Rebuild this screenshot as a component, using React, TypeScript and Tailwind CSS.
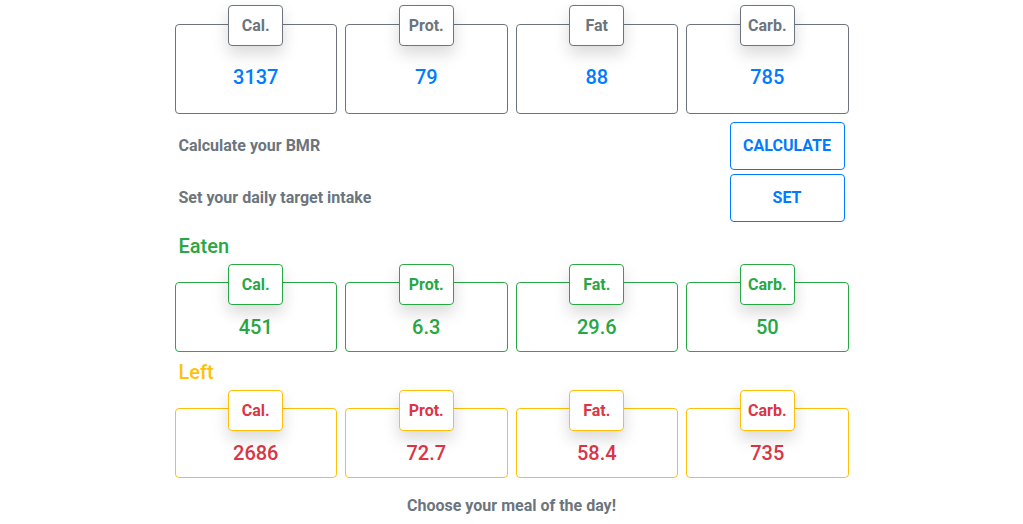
import React from "react";

type Stat = { label: string; value: string };

const target: Stat[] = [
  { label: "Cal.", value: "3137" },
  { label: "Prot.", value: "79" },
  { label: "Fat", value: "88" },
  { label: "Carb.", value: "785" },
];

const eaten: Stat[] = [
  { label: "Cal.", value: "451" },
  { label: "Prot.", value: "6.3" },
  { label: "Fat.", value: "29.6" },
  { label: "Carb.", value: "50" },
];

const left: Stat[] = [
  { label: "Cal.", value: "2686" },
  { label: "Prot.", value: "72.7" },
  { label: "Fat.", value: "58.4" },
  { label: "Carb.", value: "735" },
];

function StatCard({
  stat,
  labelClass,
  boxClass,
  valueClass,
}: {
  stat: Stat;
  labelClass: string;
  boxClass: string;
  valueClass: string;
}) {
  return (
    <div className="flex flex-col items-center">
      <div
        className={`relative z-10 w-[55px] h-[41px] flex items-center justify-center bg-white border rounded shadow-[0_8px_16px_rgba(0,0,0,0.15)] text-[16px] font-bold ${labelClass}`}
      >
        {stat.label}
      </div>
      <div className={`w-full border rounded flex justify-center ${boxClass}`}>
        <span className={`text-[20px] leading-[30px] font-medium ${valueClass}`}>{stat.value}</span>
      </div>
    </div>
  );
}

export default function App() {
  return (
    <main className="min-h-screen bg-white font-['Roboto',sans-serif]">
      <div className="w-[674px] mx-auto pt-[5px]">
        {/* Target */}
        <div className="grid grid-cols-4 gap-2">
          {target.map((s) => (
            <StatCard
              key={s.label}
              stat={s}
              labelClass="border-[#6c757d] text-[#6c757d]"
              boxClass="-mt-[22px] h-[90px] pt-[37px] border-[#6c757d]"
              valueClass="text-[#007bff]"
            />
          ))}
        </div>

        <div className="mt-[8px] flex items-center justify-between">
          <span className="pl-1 text-[16px] font-bold text-[#6c757d]">Calculate your BMR</span>
          <button className="mr-1 w-[115px] h-[48px] border border-[#007bff] rounded text-[16px] font-bold text-[#007bff]">
            CALCULATE
          </button>
        </div>
        <div className="mt-1 flex items-center justify-between">
          <span className="pl-1 text-[16px] font-bold text-[#6c757d]">Set your daily target intake</span>
          <button className="mr-1 w-[115px] h-[48px] border border-[#007bff] rounded text-[16px] font-bold text-[#007bff]">
            SET
          </button>
        </div>

        {/* Eaten */}
        <h5 className="mt-[12px] pl-1 text-[20px] leading-[24px] font-medium text-[#28a745]">Eaten</h5>
        <div className="mt-[6px] grid grid-cols-4 gap-2">
          {eaten.map((s) => (
            <StatCard
              key={s.label}
              stat={s}
              labelClass="border-[#28a745] text-[#28a745]"
              boxClass="-mt-[23px] h-[70px] pt-[29px] border-[#28a745]"
              valueClass="text-[#28a745]"
            />
          ))}
        </div>

        {/* Left */}
        <h5 className="mt-[8px] pl-1 text-[20px] leading-[24px] font-medium text-[#ffc107]">Left</h5>
        <div className="mt-[6px] grid grid-cols-4 gap-2">
          {left.map((s) => (
            <StatCard
              key={s.label}
              stat={s}
              labelClass="border-[#ffc107] text-[#dc3545]"
              boxClass="-mt-[23px] h-[70px] pt-[29px] border-[#ffc107]"
              valueClass="text-[#dc3545]"
            />
          ))}
        </div>

        <p className="mt-[17px] text-center text-[16px] leading-[22px] font-bold text-[#6c757d]">
          Choose your meal of the day!
        </p>
      </div>
    </main>
  );
}
